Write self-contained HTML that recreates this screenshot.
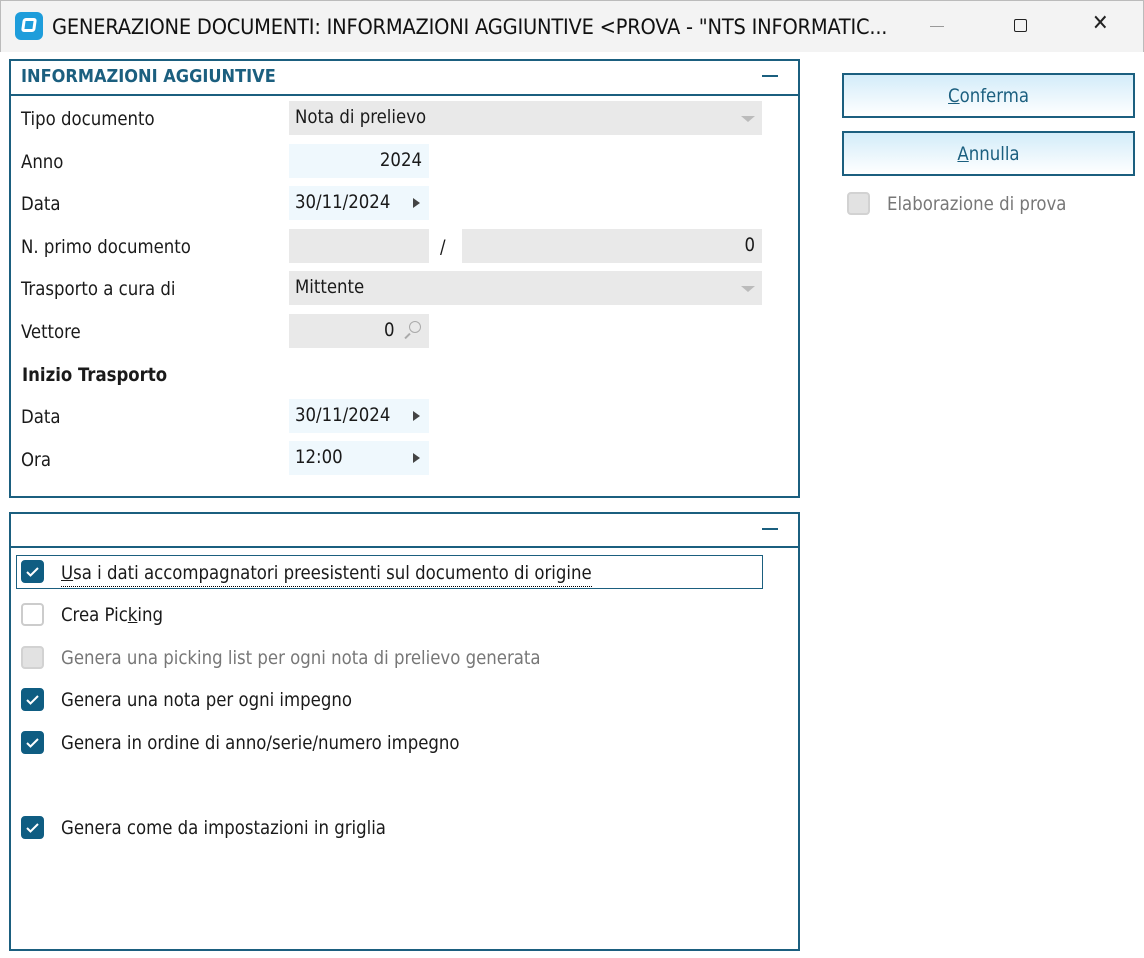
<!DOCTYPE html>
<html><head><meta charset="utf-8"><style>
*{box-sizing:border-box;margin:0;padding:0}
body{width:1144px;height:958px;background:#fff;font-family:"DejaVu Sans Condensed","DejaVu Sans","Liberation Sans",sans-serif;font-size:18.4px;color:#1a1a1a;position:relative;overflow:hidden}
.a{position:absolute}
.title{left:0;top:0;width:1144px;height:52px;background:#f3f3f3;border:1px solid #bbb;border-bottom:none}
.panel{border:2px solid #1b5f7f}
.hdr{border-bottom:2px solid #1b5f7f}
.lbl{left:21px;margin-top:2px}
.fld{background:#e9e9e9;height:34px;padding:0 7px;line-height:33px}
.blue{background:#eff8fd}
.btn{left:842px;width:293px;height:45px;border:2px solid #1b5f7f;background:linear-gradient(#d3ecf9,#fff);text-align:center;line-height:43px;color:#1b5f7f}
.cb{left:21px;width:23px;height:23px;border-radius:4px;border:2px solid #ccc;background:#fff}
.cb.on{background:#0f5d82;border-color:#0f5d82}
.cb.dis{background:#e2e2e2;border-color:#d2d2d2}
.ct{left:61px;margin-top:1px}
.tri{width:0;height:0;border-left:7px solid #444;border-top:5px solid transparent;border-bottom:5px solid transparent}
.dd{width:0;height:0;border-top:6px solid #bbb;border-left:7px solid transparent;border-right:7px solid transparent}
</style></head><body>
<div class="a title"></div>
<div class="a" style="left:15px;top:12px;width:28px;height:28px;background:#1e9ddb;border-radius:6px"><div style="position:absolute;left:7px;top:6px;width:14px;height:14px;border:3px solid #fff;border-radius:3px;transform:skewX(-8deg)"></div></div>
<div class="a" style="left:52px;top:15px;font-size:21.6px;color:#111;letter-spacing:-0.2px;white-space:nowrap">GENERAZIONE DOCUMENTI: INFORMAZIONI AGGIUNTIVE &lt;PROVA - "NTS INFORMATIC...</div>
<div class="a" style="left:930px;top:26px;width:14px;height:1px;background:#999"></div>
<div class="a" style="left:1014px;top:19px;width:13px;height:13px;border:1.5px solid #222;border-radius:2px"></div>
<div class="a" style="left:1092px;top:11px;font-size:22px;color:#222">✕</div>

<div class="a panel" style="left:9px;top:59px;width:791px;height:439px"></div>
<div class="a hdr" style="left:9px;top:94px;width:791px"></div>
<div class="a" style="left:21px;top:66px;font-weight:bold;color:#1b5f7f;font-size:18px">INFORMAZIONI AGGIUNTIVE</div>
<div class="a" style="left:762px;top:75px;width:16px;height:2px;background:#1b5f7f"></div>

<div class="a lbl" style="top:107px">Tipo documento</div>
<div class="a fld" style="left:289px;top:101px;width:473px;padding-left:6px">Nota di prelievo</div><div class="a dd" style="left:741px;top:116px"></div>
<div class="a lbl" style="top:150px">Anno</div>
<div class="a fld blue" style="left:289px;top:144px;width:140px;text-align:right">2024</div>
<div class="a lbl" style="top:192px">Data</div>
<div class="a fld blue" style="left:289px;top:186px;width:140px;padding-left:6px">30/11/2024</div><div class="a tri" style="left:413px;top:198px"></div>
<div class="a lbl" style="top:235px">N. primo documento</div>
<div class="a fld" style="left:289px;top:229px;width:140px"></div>
<div class="a" style="left:440px;top:237px">/</div>
<div class="a fld" style="left:462px;top:229px;width:300px;text-align:right">0</div>
<div class="a lbl" style="top:277px">Trasporto a cura di</div>
<div class="a fld" style="left:289px;top:271px;width:473px;padding-left:6px">Mittente</div><div class="a dd" style="left:741px;top:286px"></div>
<div class="a lbl" style="top:320px">Vettore</div>
<div class="a fld" style="left:289px;top:314px;width:140px;padding-left:95px">0</div>
<div class="a" style="left:409px;top:321px;width:12px;height:12px;border:1.5px solid #aaa;border-radius:50%"></div>
<div class="a" style="left:404px;top:335px;width:7px;height:2px;background:#aaa;transform:rotate(-45deg)"></div>
<div class="a" style="left:22px;top:365px;font-weight:bold">Inizio Trasporto</div>
<div class="a lbl" style="top:405px">Data</div>
<div class="a fld blue" style="left:289px;top:399px;width:140px;padding-left:6px">30/11/2024</div><div class="a tri" style="left:413px;top:411px"></div>
<div class="a lbl" style="top:448px">Ora</div>
<div class="a fld blue" style="left:289px;top:441px;width:140px;padding-left:6px">12:00</div><div class="a tri" style="left:413px;top:453px"></div>

<div class="a btn" style="top:73px"><u>C</u>onferma</div>
<div class="a btn" style="top:131px"><u>A</u>nnulla</div>
<div class="a cb dis" style="left:847px;top:192px"></div>
<div class="a" style="left:887px;top:194px;color:#777">Elaborazione di prova</div>

<div class="a panel" style="left:9px;top:512px;width:791px;height:439px"></div>
<div class="a hdr" style="left:9px;top:546px;width:791px"></div>
<div class="a" style="left:762px;top:528px;width:16px;height:2px;background:#1b5f7f"></div>
<div class="a" style="left:16px;top:555px;width:747px;height:34px;border:1.5px solid #1b5f7f"></div>

<div class="a cb on" style="top:560px"><svg width="19" height="19" viewBox="0 0 19 19"><path d="M4 10l3.5 3.5L15 6" stroke="#fff" stroke-width="2" fill="none"/></svg></div>
<div class="a ct" style="top:560px;border-bottom:1px dotted #000;line-height:25px;white-space:nowrap"><u>U</u>sa i dati accompagnatori preesistenti sul documento di origine</div>
<div class="a cb" style="top:603px"></div>
<div class="a ct" style="top:604px">Crea Pic<u>k</u>ing</div>
<div class="a cb dis" style="top:646px"></div>
<div class="a ct" style="top:647px;color:#777">Genera una picking list per ogni nota di prelievo generata</div>
<div class="a cb on" style="top:688px"><svg width="19" height="19" viewBox="0 0 19 19"><path d="M4 10l3.5 3.5L15 6" stroke="#fff" stroke-width="2" fill="none"/></svg></div>
<div class="a ct" style="top:689px">Genera una nota per ogni impegno</div>
<div class="a cb on" style="top:731px"><svg width="19" height="19" viewBox="0 0 19 19"><path d="M4 10l3.5 3.5L15 6" stroke="#fff" stroke-width="2" fill="none"/></svg></div>
<div class="a ct" style="top:732px">Genera in ordine di anno/serie/numero impegno</div>
<div class="a cb on" style="top:816px"><svg width="19" height="19" viewBox="0 0 19 19"><path d="M4 10l3.5 3.5L15 6" stroke="#fff" stroke-width="2" fill="none"/></svg></div>
<div class="a ct" style="top:817px">Genera come da impostazioni in griglia</div>
</body></html>
